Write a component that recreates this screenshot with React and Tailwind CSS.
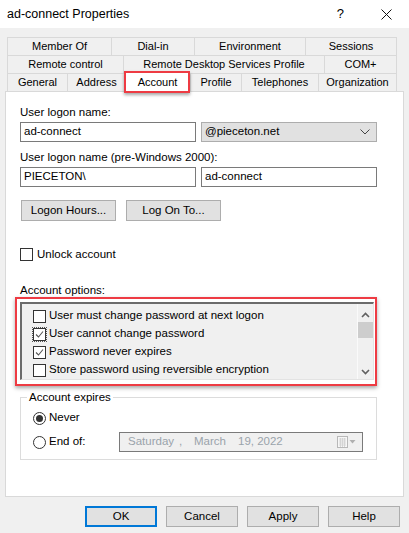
import React from 'react';

const font = { fontFamily: '"Liberation Sans", Arial, sans-serif' };

const Tab = ({ label, w, last }) => (
  <div
    className={`h-[18px] flex items-center justify-center border-t border-l border-[#d9d9d9] ${last ? 'border-r' : ''}`}
    style={{ width: w }}
  >
    {label}
  </div>
);

const Check = ({ checked, focus }) => (
  <span className={`flex items-center justify-center w-[15px] h-[15px] -m-px ${focus ? 'outline outline-1 outline-dotted outline-[#555] -outline-offset-1' : ''}`}>
    <span className="w-[13px] h-[13px] border border-[#333] bg-white flex items-center justify-center">
      {checked && (
        <svg width="9" height="9" viewBox="0 0 9 9">
          <polyline points="1,4.5 3.5,7 8,1.5" fill="none" stroke="#555" strokeWidth="1.1" />
        </svg>
      )}
    </span>
  </span>
);

const Radio = ({ on }) => (
  <span className="w-[13px] h-[13px] rounded-full border border-[#333] bg-white flex items-center justify-center">
    {on && <span className="w-[7px] h-[7px] rounded-full bg-[#333]" />}
  </span>
);

const Btn = ({ children, w = 'w-[72px]', primary }) => (
  <button
    className={`${w} h-[21px] bg-[#e1e1e1] text-[11.5px] text-black flex items-center justify-center ${primary ? 'border-2 border-[#0078d7]' : 'border border-[#adadad]'}`}
  >
    {children}
  </button>
);

const options = [
  { label: 'User must change password at next logon', checked: false },
  { label: 'User cannot change password', checked: true, focus: true },
  { label: 'Password never expires', checked: true },
  { label: 'Store password using reversible encryption', checked: false },
];

export default function App() {
  return (
    <div className="w-[409px] h-[533px] bg-[#f0f0f0] text-black text-[11.5px] overflow-hidden" style={font}>
      {/* title bar */}
      <div className="h-[28px] bg-white flex items-center pl-[7px] pr-[17px]">
        <span className="text-[12.5px] flex-1">ad-connect Properties</span>
        <span className="text-[13px] mr-[37px]">?</span>
        <svg width="11" height="11" viewBox="0 0 11 11">
          <path d="M0.5 0.5 L10.5 10.5 M10.5 0.5 L0.5 10.5" stroke="#111" strokeWidth="1" />
        </svg>
      </div>

      {/* tabs */}
      <div className="mt-[9px] ml-[7px] w-[390px] text-[11px]">
        <div className="flex">
          <Tab label="Member Of" w={104} />
          <Tab label="Dial-in" w={83} />
          <Tab label="Environment" w={111} />
          <Tab label="Sessions" w={92} last />
        </div>
        <div className="flex">
          <Tab label="Remote control" w={116} />
          <Tab label="Remote Desktop Services Profile" w={201} />
          <Tab label="COM+" w={73} last />
        </div>
        <div className="flex h-[18px]">
          <Tab label="General" w={60} />
          <Tab label="Address" w={58} />
          <div className="relative z-10 -mt-[2px] h-[21px] w-[65px] bg-white border-t border-l border-r border-[#d9d9d9] flex items-start justify-center pt-[2px]">
            Account
            <div className="absolute -left-[2px] -right-[1px] -top-px -bottom-[1px] border-2 border-[#ee3b43] shadow-[0_2px_3px_rgba(0,0,0,0.35)]" />
          </div>
          <Tab label="Profile" w={51} />
          <Tab label="Telephones" w={77} />
          <Tab label="Organization" w={79} last />
        </div>
      </div>

      {/* panel */}
      <div className="mx-[5px] h-[406px] border border-[#d9d9d9] bg-white px-[14px]">
        <div className="mt-[13px] h-[14px] leading-[14px]">User logon name:</div>
        <div className="mt-[3px] flex gap-[5px]">
          <div className="w-[176px] h-[20px] border border-[#7a7a7a] flex items-center px-[3px]">ad-connect</div>
          <div className="w-[176px] h-[20px] border border-[#adadad] bg-[#e1e1e1] flex items-center pl-[3px] pr-[6px]">
            <span className="flex-1">@pieceton.net</span>
            <svg width="10" height="6" viewBox="0 0 10 6">
              <polyline points="0.5,0.5 5,5 9.5,0.5" fill="none" stroke="#444" strokeWidth="1" />
            </svg>
          </div>
        </div>

        <div className="mt-[8px] h-[14px] leading-[14px]">User logon name (pre-Windows 2000):</div>
        <div className="mt-[3px] flex gap-[5px]">
          <div className="w-[176px] h-[20px] border border-[#7a7a7a] flex items-center px-[3px]">PIECETON\</div>
          <div className="w-[176px] h-[20px] border border-[#7a7a7a] flex items-center px-[3px]">ad-connect</div>
        </div>

        <div className="mt-[13px] ml-px flex gap-[10px]">
          <Btn w="w-[95px]">Logon Hours...</Btn>
          <Btn w="w-[95px]">Log On To...</Btn>
        </div>

        <div className="mt-[27px] h-[13px] flex items-center gap-[4px]">
          <span className="w-[13px] h-[13px] border border-[#333] bg-white" />
          <span>Unlock account</span>
        </div>

        <div className="mt-[22px] h-[14px] leading-[14px]">Account options:</div>

        {/* highlighted list */}
        <div className="-ml-[5px] w-[362px] h-[89px] border-2 border-[#ee3b43] shadow-[0_2px_4px_rgba(0,0,0,0.35)] pl-[3px] pt-[3px]">
          <div className="w-[354px] h-[78px] flex border-t-2 border-l-2 border-t-[#6b6b6b] border-l-[#6b6b6b] border-b border-r border-b-[#e3e3e3] border-r-[#e3e3e3] bg-[#f0f0f0]">
            <div className="flex-1 pl-[11px] pt-[3px]">
              {options.map((o) => (
                <div key={o.label} className="h-[18px] flex items-center gap-[3px]">
                  <Check checked={o.checked} focus={o.focus} />
                  <span>{o.label}</span>
                </div>
              ))}
            </div>
            <div className="w-[16px] border-l border-[#fafafa] flex flex-col items-center">
              <svg className="mt-[8px]" width="9" height="6" viewBox="0 0 9 6">
                <polyline points="1,5 4.5,1.5 8,5" fill="none" stroke="#606060" strokeWidth="1.6" />
              </svg>
              <div className="mt-[4px] w-[15px] h-[16px] bg-[#cdcdcd]" />
              <svg className="mt-auto mb-[4px]" width="9" height="6" viewBox="0 0 9 6">
                <polyline points="1,1 4.5,4.5 8,1" fill="none" stroke="#606060" strokeWidth="1.6" />
              </svg>
            </div>
          </div>
        </div>

        {/* account expires */}
        <fieldset className="mt-[4px] w-[357px] h-[70px] border border-[#dcdcdc] pl-[12px]">
          <legend className="-ml-[6px] px-[2px] leading-[14px]">Account expires</legend>
          <div className="mt-[7px] h-[14px] flex items-center gap-[3px]">
            <Radio on />
            <span>Never</span>
          </div>
          <div className="mt-[7px] h-[20px] flex items-center">
            <Radio />
            <span className="ml-[3px] w-[70px]">End of:</span>
            <div className="w-[244px] h-[20px] border border-[#7a7a7a] bg-[#f0f0f0] flex items-center text-[#9aa3ab] pl-[8px] pr-[5px]">
              <span className="w-[51px]">Saturday</span>
              <span className="w-[15px]">,</span>
              <span className="w-[44px]">March</span>
              <span className="flex-1">19, 2022</span>
              <svg width="20" height="12" viewBox="0 0 20 12">
                <rect x="0.5" y="0.5" width="10" height="11" fill="#f7f7f7" stroke="#b8b8b8" />
                <path d="M2 3h7M2 5h7M2 7h7M2 9h7M3.5 2v9M5.5 2v9M7.5 2v9" stroke="#cfcfcf" strokeWidth="0.8" />
                <polygon points="12.5,4 18.5,4 15.5,7.5" fill="#b0b0b0" />
              </svg>
            </div>
          </div>
        </fieldset>
      </div>

      {/* footer buttons */}
      <div className="mt-[9px] pr-[9px] flex justify-end gap-[9px]">
        <Btn primary>OK</Btn>
        <Btn>Cancel</Btn>
        <Btn>Apply</Btn>
        <Btn>Help</Btn>
      </div>
    </div>
  );
}
